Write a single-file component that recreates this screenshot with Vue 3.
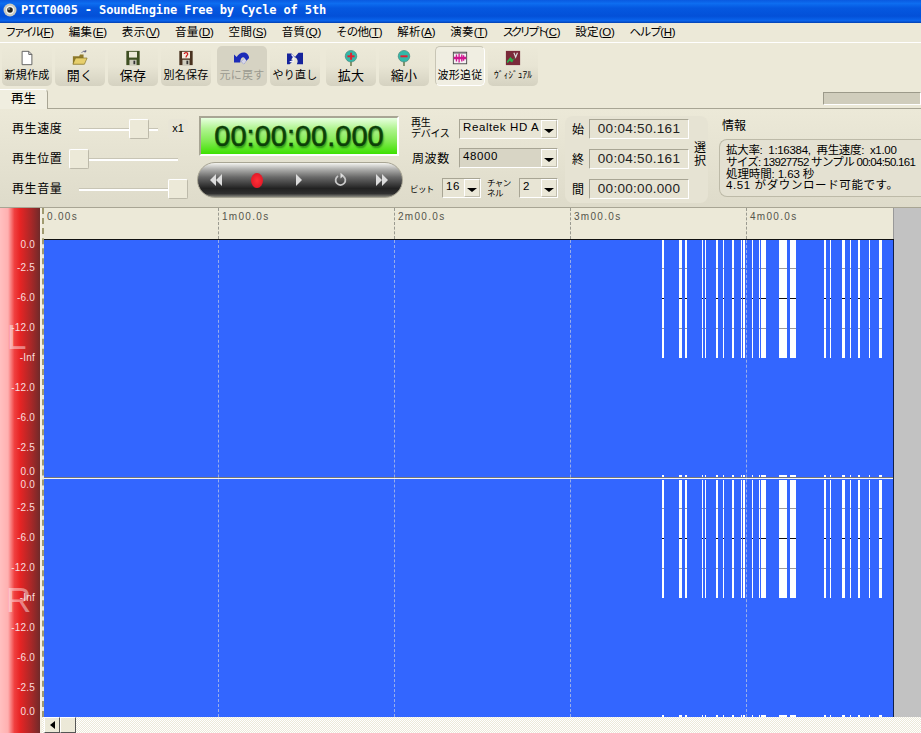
<template>
  <div class="app">
    <header class="titlebar">
      <svg width="14" height="14" viewBox="0 0 14 14" class="title-icon">
        <circle cx="7" cy="7" r="6.5" fill="#c9c9c0"/>
        <circle cx="7" cy="7" r="4.2" fill="#f5f5ee"/>
        <circle cx="7" cy="7" r="2.8" fill="#222"/>
        <circle cx="6" cy="6" r="0.8" fill="#ddd"/>
      </svg>
      <span>PICT0005 - SoundEngine Free by Cycle of 5th</span>
    </header>

    <nav class="menubar">
      <span v-for="m in menus" :key="m.label" class="menu-item"><span :style="{ letterSpacing: m.ls + 'px' }">{{ m.label }}</span>(<u>{{ m.key }}</u>)</span>
    </nav>

    <div class="toolbar">
      <div v-for="group in tools" :key="group[0].label" class="tool-group">
        <button
          v-for="t in group"
          :key="t.label"
          class="tool"
          :class="{ disabled: t.disabled, pressed: t.pressed, big: t.big, tiny: t.tiny }"
        >
          <svg width="16" height="16" viewBox="0 0 18 18" class="tool-icon">
            <template v-if="t.icon === 'new'">
              <path d="M3.500 1.500H11L14.500 5V16.500H3.500Z" fill="#fff" stroke="#555"/>
              <path d="M11 1.500V5H14.500" fill="none" stroke="#555"/>
            </template>
            <template v-else-if="t.icon === 'open'">
              <path d="M1 7H8L9 5H13V16H1Z" fill="#8f7a2a"/>
              <path d="M1 16L4 9H17L14 16Z" fill="#e7cf6c" stroke="#7a6a20" stroke-width="0.7"/>
              <path d="M11 3C12.500 1 14 1 15.500 2M15.500 2V0M15.500 2H13.500" fill="none" stroke="#557" stroke-width="1"/>
            </template>
            <template v-else-if="t.icon === 'save'">
              <rect x="1.500" y="1" width="15" height="16" fill="#3f4f22"/>
              <rect x="4.500" y="2" width="9" height="6.500" fill="#ece9d8"/>
              <rect x="5" y="11" width="8" height="6" fill="#cfcdbd"/>
              <rect x="9.500" y="12" width="2" height="4" fill="#333"/>
            </template>
            <template v-else-if="t.icon === 'saveas'">
              <rect x="1.500" y="1" width="15" height="16" fill="#4a3320"/>
              <rect x="4.500" y="2" width="9" height="7.500" fill="#f3ece0"/>
              <path d="M7 4.500C7 2.500 11 2.500 11 4.500C11 6 9 6 9 8.500" fill="none" stroke="#d01818" stroke-width="1.300"/>
              <rect x="5" y="11" width="8" height="6" fill="#cfcdbd"/>
              <rect x="9.500" y="12" width="2" height="4" fill="#333"/>
            </template>
            <template v-else-if="t.icon === 'undo'">
              <path d="M0 5L3 8C5 4 9 2 13 3C15 4 17 6 17 9L14 12L11 16L8 13L12 9C10 7 7 9 7 14H0Z" fill="#1b2bb8"/>
              <path d="M8 13L12 9L14 12L11 16Z" fill="#d8d8e8"/>
            </template>
            <template v-else-if="t.icon === 'redo'">
              <path d="M0 4H5L9 8L13 3H18V16H11C13 13 12 9 8 8C6 8 5 10 5 12L7 12L3 16H0Z" fill="#16249c"/>
              <path d="M5 5C8 7 8 10 7 13H3" fill="none" stroke="#f0f0f8" stroke-width="1.500"/>
            </template>
            <template v-else-if="t.icon === 'zoomin' || t.icon === 'zoomout'">
              <path d="M9 11V18" stroke="#7a8a60" stroke-width="2"/>
              <circle cx="9" cy="7" r="6.500" fill="#33b8a8" stroke="#4a8a80" stroke-width="0.8"/>
              <rect x="5" y="6" width="8" height="2.200" fill="#e02030"/>
              <rect v-if="t.icon === 'zoomin'" x="8" y="3" width="2.200" height="8" fill="#e02030"/>
            </template>
            <template v-else-if="t.icon === 'wave'">
              <rect x="1.500" y="2.500" width="15" height="13" fill="#f4f0f4" stroke="#444"/>
              <path d="M2 9H16" stroke="#d01890" stroke-width="3"/>
              <path d="M5 5V13M8 4V14M11 5V13M13 6V12" stroke="#d01890" stroke-width="1.500"/>
              <rect x="2" y="3" width="14" height="1" fill="#666"/>
            </template>
            <template v-else>
              <rect x="1" y="1" width="16" height="16" fill="#7a2a3a"/>
              <path d="M2 13L6 8L9 11L12 7L8 14L5 12L3 15Z" fill="#2ab04a"/>
              <path d="M10 3L12 8L14 3" fill="none" stroke="#ddd" stroke-width="1.300"/>
            </template>
          </svg>
          <span class="tool-label">{{ t.label }}</span>
        </button>
      </div>
    </div>

    <div class="tabbar">
      <div class="tab">再生</div>
      <div class="tab-scroll"></div>
    </div>

    <section class="panel">
      <div class="sliders">
        <div v-for="s in sliders" :key="s.label" class="slider-row">
          <span class="slider-label">{{ s.label }}</span>
          <div class="slider" :class="s.cls">
            <div class="slider-track"></div>
            <div class="slider-thumb"></div>
          </div>
          <span v-if="s.note" class="slider-note">{{ s.note }}</span>
        </div>
      </div>

      <div class="transport-col">
        <div class="clock"><span>00:00:00.000</span></div>
        <div class="transport">
          <svg width="12" height="14" viewBox="0 0 12 14"><path d="M6 1V13L0 7ZM12 1V13L6 7Z" fill="#dcdcdc"/></svg>
          <span class="rec"></span>
          <svg width="12" height="14" viewBox="0 0 12 14"><path d="M3 1V13L9 7Z" fill="#dcdcdc"/></svg>
          <svg width="13" height="20" viewBox="0 0 16 20">
            <path d="M5 5A6 6 0 1 0 11 5" fill="none" stroke="#c8c8c8" stroke-width="2.200"/>
            <path d="M8 1V8L12 4.500Z" fill="#e0e0e0"/>
          </svg>
          <svg width="12" height="14" viewBox="0 0 12 14"><path d="M0 1V13L6 7ZM6 1V13L12 7Z" fill="#dcdcdc"/></svg>
        </div>
      </div>

      <div class="devices">
        <div class="device-row">
          <span class="device-label small">再生<br>デバイス</span>
          <div class="combo wide"><span>Realtek HD A</span><i class="combo-btn"></i></div>
        </div>
        <div class="device-row">
          <span class="device-label">周波数</span>
          <div class="combo wide flat"><span>48000</span><i class="combo-btn"></i></div>
        </div>
        <div class="device-row last">
          <span class="bit-label">ビット</span>
          <div class="combo short"><span>16</span><i class="combo-btn"></i></div>
          <span class="ch-label">チャン<br>ネル</span>
          <div class="combo short"><span>2</span><i class="combo-btn"></i></div>
        </div>
      </div>

      <div class="selection">
        <div class="sel-rows">
          <div v-for="r in selection" :key="r.label" class="sel-row">
            <span class="sel-label">{{ r.label }}</span>
            <span class="sel-value">{{ r.value }}</span>
          </div>
        </div>
        <span class="sel-title">選<br>択</span>
      </div>

      <div class="info">
        <div class="info-title">情報</div>
        <div class="info-box">
          <div v-for="line in info" :key="line.text" :style="{ letterSpacing: line.ls + 'px' }">{{ line.text }}</div>
        </div>
      </div>
    </section>

    <main class="main">
      <div class="meter">
        <span class="channel-letter l">L</span>
        <span class="channel-letter r">R</span>
        <span
          v-for="(d, i) in dbLabels"
          :key="i"
          class="db"
          :style="{ top: d.y + 'px' }"
        >{{ d.text }}</span>
      </div>

      <div class="center">
        <div class="scroll-area">
          <div class="canvas">
            <div class="ruler">
              <span v-for="t in rulerTicks" :key="t" class="ruler-tick">{{ t }}</span>
            </div>
            <div class="waves">
              <div v-for="ch in 2" :key="ch" class="channel">
                <div
                  v-for="(b, i) in bars"
                  :key="i"
                  class="bar"
                  :style="{ left: b[0] + 'px', width: b[1] + 'px' }"
                ></div>
                <div
                  v-for="(b, i) in bars"
                  :key="'t' + i"
                  class="bar-end"
                  :style="{ left: b[0] + 'px', width: b[1] + 'px' }"
                ></div>
              </div>
              <div class="split"></div>
              <div
                v-for="x in gridLines"
                :key="x"
                class="gridline"
                :style="{ left: x + 'px' }"
              ></div>
            </div>
          </div>
          <div class="side"></div>
        </div>
        <div class="hscroll">
          <div class="hscroll-btn">
            <svg width="5" height="8" viewBox="0 0 5 8"><path d="M5 0V8L0 4Z" fill="#000"/></svg>
          </div>
          <div class="hscroll-thumb"></div>
        </div>
      </div>
    </main>
  </div>
</template>

<script setup>
// ls: letter spacing of the label, the kana items are set narrower in the original
const menus = [
  { label: 'ファイル', key: 'F', ls: -2.75 },
  { label: '編集', key: 'E', ls: 0.3 },
  { label: '表示', key: 'V', ls: 0.3 },
  { label: '音量', key: 'D', ls: 0.3 },
  { label: '空間', key: 'S', ls: 0.3 },
  { label: '音質', key: 'Q', ls: 0.3 },
  { label: 'その他', key: 'T', ls: -0.7 },
  { label: '解析', key: 'A', ls: 0.3 },
  { label: '演奏', key: 'T', ls: 0.3 },
  { label: 'スクリプト', key: 'C', ls: -3 },
  { label: '設定', key: 'O', ls: 0.3 },
  { label: 'ヘルプ', key: 'H', ls: -1.3 }
]

const tools = [
  [
    { label: '新規作成', icon: 'new' },
    { label: '開く', icon: 'open', big: true },
    { label: '保存', icon: 'save', big: true },
    { label: '別名保存', icon: 'saveas' }
  ],
  [
    { label: '元に戻す', icon: 'undo', disabled: true },
    { label: 'やり直し', icon: 'redo' }
  ],
  [
    { label: '拡大', icon: 'zoomin', big: true },
    { label: '縮小', icon: 'zoomout', big: true }
  ],
  [
    { label: '波形追従', icon: 'wave', pressed: true },
    { label: 'ｳﾞｨｼﾞｭｱﾙ', icon: 'visual', tiny: true }
  ]
]

const sliders = [
  { label: '再生速度', cls: 'speed', note: 'x1' },
  { label: '再生位置', cls: 'pos' },
  { label: '再生音量', cls: 'vol' }
]

const selection = [
  { label: '始', value: '00:04:50.161' },
  { label: '終', value: '00:04:50.161' },
  { label: '間', value: '00:00:00.000' }
]

const info = [
  { text: '拡大率:  1:16384,  再生速度:  x1.00', ls: -0.3 },
  { text: 'サイズ: 13927752 サンプル 00:04:50.161', ls: -0.7 },
  { text: '処理時間: 1.63 秒', ls: -0.1 },
  { text: '4.51 がダウンロード可能です。', ls: 0.6 }
]

const rulerTicks = ['0.00s', '1m00.0s', '2m00.0s', '3m00.0s', '4m00.0s']

// y is relative to the top of the meter (page y 208)
const dbLabels = [
  ['0.0', 36], ['-2.5', 59], ['-6.0', 89], ['-12.0', 119], ['-Inf', 149],
  ['-12.0', 179], ['-6.0', 209], ['-2.5', 239], ['0.0', 263],
  ['0.0', 276], ['-2.5', 299], ['-6.0', 329], ['-12.0', 359], ['-Inf', 389],
  ['-12.0', 419], ['-6.0', 449], ['-2.5', 479], ['0.0', 503]
].map(([text, y]) => ({ text, y }))

// x offset from the wave area's left edge (page x 44), width
const bars = [
  [618, 2], [635, 3], [641, 2], [658, 1], [661, 1], [672, 2], [679, 1], [688, 2],
  [697, 1], [699, 2], [708, 1], [715, 1], [717, 5], [735, 8], [746, 6], [780, 2],
  [786, 1], [798, 3], [806, 1], [814, 2], [825, 1], [835, 3]
]

const gridLines = [174, 350, 526, 702]
</script>

<style>
html, body {
  margin: 0;
  background: #ece9d8;
}
</style>

<style scoped>
.app {
  width: 921px;
  height: 733px;
  display: flex;
  flex-direction: column;
  overflow: hidden;
  background: #ece9d8;
  color: #000;
  font-family: "Liberation Sans", "Noto Sans CJK JP", sans-serif;
  font-size: 12px;
}

.titlebar {
  height: 23px;
  flex: none;
  display: flex;
  align-items: center;
  gap: 4px;
  padding: 0 0 3px 3px;
  box-sizing: border-box;
  color: #fff;
  font-family: "DejaVu Sans Mono", monospace;
  font-weight: bold;
  font-size: 12px;
  letter-spacing: -0.13px;
  background: linear-gradient(#0a5ae0 0%, #0d6df0 15%, #0558e0 35%, #0350d8 70%, #0a64ec 90%, #0340b0 100%);
}

.menubar {
  flex: none;
  display: flex;
  gap: 15px;
  align-items: center;
  padding: 0 0 3px 5px;
  height: 16px;
  border-bottom: 1px solid #fff;
  font-size: 11.5px;
}

.menu-item { white-space: nowrap; letter-spacing: -0.3px; }
.menu-item u { font-family: "Liberation Sans", sans-serif; }

.toolbar {
  height: 45px;
  flex: none;
  display: flex;
  gap: 6px;
  padding: 3px 0 0 2px;
  box-sizing: border-box;
}

.tool-group {
  display: flex;
  gap: 3px;
}

.tool {
  width: 50px;
  height: 40px;
  padding: 0;
  margin: 0;
  border: 0;
  border-radius: 5px;
  display: flex;
  flex-direction: column;
  align-items: center;
  background: linear-gradient(#ece9d8 0%, #e8e5d4 50%, #d5d2c1 100%);
  color: #000;
  font-family: inherit;
  font-size: 11px;
  overflow: hidden;
}

.tool-icon { margin-top: 4px; flex: none; }
.tool-label { white-space: nowrap; line-height: 14px; margin-top: 2px; letter-spacing: 0.2px; }
.tool.big .tool-label { font-size: 13px; line-height: 16px; margin-top: 2px; }
.tool.tiny .tool-label { font-size: 9.5px; letter-spacing: 0; }
.tool.disabled { background: #d6d3c3; color: #9a9a90; }
.tool.pressed {
  box-sizing: border-box;
  border: 1px solid;
  border-color: #c8c5b5 #fff #fff #c8c5b5;
  background: #f0eee2;
}
.tool.pressed .tool-icon { margin-top: 3px; }

.tabbar {
  height: 21px;
  flex: none;
  display: flex;
  align-items: flex-end;
  justify-content: space-between;
  border-bottom: 1px solid #a8a594;
  box-sizing: border-box;
}

.tab {
  width: 48px;
  height: 20px;
  box-sizing: border-box;
  text-align: center;
  line-height: 19px;
  font-size: 12.5px;
  border-right: 1px solid #a8a594;
  border-top-right-radius: 4px;
  border-top: 1px solid #fff;
  background: #f0eee0;
  margin-bottom: -1px;
}

.tab-scroll {
  width: 98px;
  height: 13px;
  margin-bottom: 3px;
  background: #d0cdbc;
  border: 1px solid;
  border-color: #9c9a8a #fff #fff #9c9a8a;
  box-sizing: border-box;
}

.panel {
  height: 99px;
  flex: none;
  display: flex;
  background: linear-gradient(#ece9d8, #dedbca);
  border-bottom: 1px solid #a8a594;
  box-sizing: border-box;
  overflow: hidden;
}

.sliders {
  width: 197px;
  flex: none;
  padding-top: 10px;
  display: flex;
  flex-direction: column;
  gap: 10px;
  box-sizing: border-box;
}

.slider-row {
  height: 20px;
  display: flex;
  align-items: center;
}

.slider-label {
  width: 69px;
  padding: 0 0 3px 12px;
  box-sizing: border-box;
  flex: none;
  font-size: 12px;
  letter-spacing: 0.6px;
}

.slider {
  position: relative;
  height: 20px;
  flex: none;
}
.slider.speed { width: 79px; margin-left: 10px; }
.slider.pos { width: 109px; }
.slider.vol { width: 109px; margin-left: 10px; }

.slider-track {
  position: absolute;
  left: 0;
  right: 0;
  top: 9px;
  height: 2px;
  background: #fff;
  border-top: 1px solid #c8c5b5;
}

.slider-thumb {
  position: absolute;
  top: 0;
  width: 20px;
  height: 20px;
  box-sizing: border-box;
  background: #ece9d8;
  border: 1px solid;
  border-color: #fff #bdbaaa #bdbaaa #fff;
  border-radius: 2px;
}
.slider.speed .slider-thumb { left: 50px; }
.slider.pos .slider-thumb { left: 0; }
.slider.vol .slider-thumb { right: 0; }

.slider-note {
  margin-left: 10px;
  width: 20px;
  height: 20px;
  line-height: 19px;
  text-align: center;
  font-size: 11px;
  background: #e8e5d6;
  border-radius: 4px;
  flex: none;
}

.transport-col {
  width: 206px;
  flex: none;
  padding-top: 7px;
  box-sizing: border-box;
}

.clock {
  width: 200px;
  height: 40px;
  margin-left: 2px;
  box-sizing: border-box;
  border: 2px solid;
  border-color: #a8a594 #fff #fff #a8a594;
  background: linear-gradient(#e8ffe0 0%, #b0f490 30%, #80ea50 65%, #3de000 100%);
  display: flex;
  align-items: center;
  justify-content: center;
  font-size: 29px;
  color: #0c4008;
  -webkit-text-stroke: 0.5px #0c4008;
  text-shadow: 1px 2px 2px rgba(20, 110, 10, 0.75);
}

.transport {
  height: 36px;
  margin-top: 6px;
  box-sizing: border-box;
  border: 1px solid #a8a594;
  border-radius: 18px;
  background: linear-gradient(#f4f4f0 0%, #b0b0ae 18%, #686868 42%, #222 75%, #303030 90%, #8a8a80 100%);
  display: flex;
  align-items: center;
  justify-content: space-between;
  padding: 0 14px 0 12px;
}

.rec {
  width: 12px;
  height: 15px;
  border-radius: 50%;
  background: radial-gradient(#ff3038, #d81020);
}

.devices {
  width: 154px;
  flex: none;
  margin-left: 7px;
  padding-top: 10px;
  display: flex;
  flex-direction: column;
  gap: 9px;
  box-sizing: border-box;
}

.device-row {
  height: 20px;
  display: flex;
  align-items: center;
}
.device-row.last { margin-top: 1px; }

.device-label {
  width: 49px;
  flex: none;
  font-size: 12px;
  letter-spacing: 0.6px;
  padding: 0 0 2px 2px;
  box-sizing: border-box;
}
.device-label.small { font-size: 10px; line-height: 11px; letter-spacing: -0.3px; padding-left: 1px; }

.bit-label { width: 32px; flex: none; font-size: 8.5px; letter-spacing: -0.6px; padding-bottom: 1px; }
.ch-label { width: 32px; flex: none; margin-left: 6px; font-size: 8.5px; line-height: 10px; letter-spacing: -0.6px; }

.combo {
  height: 20px;
  position: relative;
  box-sizing: border-box;
  border: 1px solid;
  border-color: #a8a594 #fff #fff #a8a594;
  font-size: 11.5px;
  line-height: 14px;
  padding-left: 3px;
  letter-spacing: 0.6px;
  white-space: nowrap;
  background: #e8e5d5;
  flex: none;
}
.combo.wide { width: 99px; }
.combo.flat { background: #d8d5c5; }
.combo.short { width: 39px; }

.combo-btn {
  position: absolute;
  right: 0;
  top: 0;
  bottom: 0;
  width: 16px;
  box-sizing: border-box;
  background: #ebe8d8;
  border: 1px solid;
  border-color: #fff #c0bdac #c0bdac #fff;
}
.combo-btn::after {
  content: "";
  position: absolute;
  left: 2px;
  top: 8px;
  border: 5px solid transparent;
  border-top: 4px solid #000;
  border-bottom: 0;
}

.selection {
  width: 143px;
  flex: none;
  margin-left: 1px;
  margin-top: 7px;
  height: 87px;
  display: flex;
  background: #e6e3d3;
  border-radius: 8px;
}

.sel-rows {
  padding-top: 3px;
  width: 124px;
  flex: none;
  display: flex;
  flex-direction: column;
  gap: 10px;
}

.sel-row {
  height: 20px;
  display: flex;
  align-items: center;
}

.sel-label {
  width: 24px;
  flex: none;
  padding: 0 0 2px 7px;
  box-sizing: border-box;
}

.sel-value {
  width: 100px;
  height: 20px;
  box-sizing: border-box;
  border: 1px solid;
  border-color: #a8a594 #fff #fff #a8a594;
  text-align: center;
  line-height: 18px;
  font-size: 13.5px;
  color: #222;
  letter-spacing: 0.3px;
}

.sel-title {
  margin: 26px 0 0 5px;
  font-size: 12px;
  line-height: 13px;
}

.info {
  margin-left: 11px;
  flex: 1;
  min-width: 0;
}

.info-title {
  margin-top: 9px;
  height: 16px;
  line-height: 16px;
  padding-left: 3px;
}

.info-box {
  margin-top: 5px;
  height: 58px;
  width: 240px;
  box-sizing: border-box;
  padding: 5px 0 0 6px;
  border: 1px solid #bdbaa8;
  border-right: 0;
  border-radius: 8px 0 0 8px;
  background: #e4e1d2;
  font-size: 11.5px;
  line-height: 11.800px;
  white-space: pre;
}

.main {
  flex: 1;
  min-height: 0;
  display: flex;
}

.meter {
  position: relative;
  width: 40px;
  flex: none;
  color: #f6dede;
  background: linear-gradient(90deg, #ffc0c0 0%, #ffb0b0 20%, #f04040 36%, #e82424 50%, #a82828 78%, #702a2a 100%);
  border-right: 2px solid #f4f0e4;
  overflow: hidden;
}

.db {
  position: absolute;
  right: 5px;
  font-size: 10px;
  letter-spacing: 0.2px;
  line-height: 11px;
  margin-top: -5px;
}

.channel-letter {
  position: absolute;
  font-size: 35px;
  line-height: 35px;
  color: rgba(255, 255, 255, 0.45);
}
.channel-letter.l { left: 7px; top: 111px; }
.channel-letter.r { left: 6px; top: 374px; }

.center {
  flex: 1;
  min-width: 0;
  display: flex;
  flex-direction: column;
}

.scroll-area {
  flex: 1;
  min-height: 0;
  display: flex;
}

.canvas {
  width: 852px;
  box-sizing: border-box;
  flex: none;
  display: flex;
  flex-direction: column;
  border-left: 2px dashed #a09a70;
}

.ruler {
  height: 32px;
  flex: none;
  display: flex;
  background: #ece9d8;
  border-bottom: 1px solid #111;
  box-sizing: border-box;
}

.ruler-tick {
  width: 176px;
  flex: none;
  box-sizing: border-box;
  padding: 2px 0 0 3px;
  font-size: 10px;
  line-height: 14px;
  letter-spacing: 1.300px;
  color: #55554c;
  border-right: 1px dashed #9a9a90;
}
.ruler-tick:first-child { width: 175px; }
.ruler-tick:last-child { width: 147px; border-right: 1px solid #999; }

.waves {
  position: relative;
  flex: 1;
  min-height: 0;
  overflow: hidden;
  box-sizing: border-box;
  background: #3366ff;
  border-right: 1px solid #10204a;
}

.channel {
  position: relative;
  height: 240px;
}

.bar {
  position: absolute;
  top: 0;
  height: 118px;
  background:
    linear-gradient(#9a9a9a, #9a9a9a) 0 28px / 100% 1px no-repeat,
    linear-gradient(#111, #111) 0 58px / 100% 1px no-repeat,
    linear-gradient(#9a9a9a, #9a9a9a) 0 88px / 100% 1px no-repeat,
    #fff;
}

.bar-end {
  position: absolute;
  top: 235px;
  height: 2px;
  background: #fff;
}

.split {
  position: absolute;
  left: 0;
  right: 0;
  top: 237px;
  height: 2px;
  background: linear-gradient(#777 50%, #f4f4f4 50%);
}

.gridline {
  position: absolute;
  top: 0;
  bottom: 0;
  border-left: 1px dashed rgba(220, 220, 220, 0.6);
}

.side {
  flex: 1;
  background: #c2c2c2;
}

.hscroll {
  height: 16px;
  flex: none;
  display: flex;
  padding-left: 2px;
  background: repeating-conic-gradient(#fff 0 25%, #ece9d8 0 50%) 0 0 / 2px 2px;
}

.hscroll-btn, .hscroll-thumb {
  width: 16px;
  height: 16px;
  box-sizing: border-box;
  background: #ece9d8;
  border: 1px solid;
  border-color: #fff #555 #555 #fff;
  display: flex;
  align-items: center;
  justify-content: center;
}
</style>
